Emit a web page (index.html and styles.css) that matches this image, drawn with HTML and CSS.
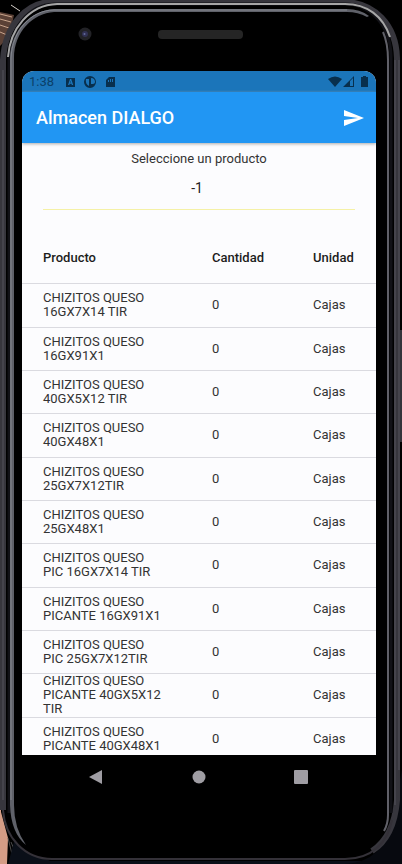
FILE: index.html
```html
<!DOCTYPE html>
<html lang="es">
<head>
<meta charset="utf-8">
<meta name="viewport" content="width=device-width, initial-scale=1">
<title>Almacen DIALGO</title>
<link rel="stylesheet" href="styles.css">
</head>
<body>
<div class="phone">
  <svg class="frame" viewBox="0 0 402 864" preserveAspectRatio="none" aria-hidden="true">
    <rect width="402" height="864" fill="#000"/>
    <path d="M0 12L14 15L12 24L6 40L0 46Z" fill="#5b4136"/>
    <path d="M0 14L12 17M0 19L11 22M0 25L9 28M0 32L7 35" stroke="#c9a58d" stroke-width="1"/>
    <path d="M11 5L20 11" stroke="#d8d2cc" stroke-width="1"/>
    <path d="M0 600H1V812L8 838L7 864H0Z" fill="#d49c85"/>
    <path d="M8 838L14 862M11 842L16 854" stroke="#4c4c4c" stroke-width="1"/>
    <path d="M8 864L14 842L50 861H402V864Z" fill="#0a0f18"/>
    <path d="M392 820L402 770V864H345Q384 862 392 820Z" fill="#07090f"/>
    <path d="M52 2C26 3 4 24 3 60V810C5 838 25 859 52 859H345C377 859 391 842 391 808V55C391 24 374 3 345 3Z" fill="#000"/>
    <path d="M3 810V60C5 24 28 2 52 2H345C374 3 396 24 397 58V800C395 826 386 842 372 851" fill="none" stroke="#37363d" stroke-width="6"/>
    <path d="M9 813V60C10 28 28 5 54 4H345C370 4 390 25 391 55V813" fill="none" stroke="#111116" stroke-width="3"/>
    <path d="M8 57C10 29 29 5 57 4H345C367 4 383 16 390 37" fill="none" stroke="#a6a6a6" stroke-width="2"/>
    <path d="M3 70V800M395 60V805M399 60V770" fill="none" stroke="#55535d" stroke-width="1"/>
    <path d="M3 810C5 838 25 859 52 859H345C372 859 388 842 392 820" fill="none" stroke="#343138" stroke-width="2"/>
    <path d="M26 845Q11 833 10 805V58C11 30 30 11 54 9H347Q360 9 369 16L367 17Q358 12 347 12H54C33 13 14 32 14 58V805Q14 828 26 845Z" fill="#5f6169"/>
    <path d="M11 800V58C12 31 31 10 54 10H347" fill="none" stroke="#858890" stroke-width="1"/>
    <path d="M383 32Q388 43 388 60V815Q388 824 384 831" fill="none" stroke="#606068" stroke-width="2"/>
    <rect x="400" y="330" width="2" height="112" fill="#33333a"/>
    <circle cx="85" cy="34" r="6.500" fill="#222226"/>
    <circle cx="85" cy="34" r="3" fill="#313153"/>
    <circle cx="84.500" cy="34" r="1" fill="#626a9c"/>
    <rect x="158" y="30" width="85" height="9" rx="4" fill="#252525"/>
  </svg>

  <main class="screen">
    <div class="status">
      <span class="clock">1:38</span>
      <svg class="notifications" viewBox="0 0 52 14" aria-hidden="true">
        <path fill-rule="evenodd" d="M1 3H10V12H1ZM5 4L3 10H4.300L4.800 8.700H6.400L6.900 10H8.200L6.200 4ZM5.600 5.800L6.100 7.500H5.100Z"/>
        <path fill-rule="evenodd" d="M25 1A6 6 0 1 0 25 13A6 6 0 1 0 25 1ZM26 3C29 3 30 5 30 7C30 8 29 9 28 9H26ZM21 4H24V11Q20 9 21 4Z"/>
        <path fill-rule="evenodd" d="M44 2H50V12H41V5ZM43 5V7H44V5ZM45 4V7H46V4ZM47 4V7H48V4Z"/>
      </svg>
      <svg class="signals" viewBox="0 0 42 14" aria-hidden="true">
        <path d="M1 4Q8 -1 15 4L8 12Z"/>
        <path fill-rule="evenodd" d="M16 12L27 1V12ZM23 6V11H26V3Z"/>
        <path d="M34 2H36V1H39V2H41V12H34Z"/>
      </svg>
    </div>
    <header class="appbar">
      <h1>Almacen DIALGO</h1>
      <button class="send" type="button" aria-label="Enviar">
        <svg viewBox="0 0 20 18" aria-hidden="true"><path d="M0 1L20 9L0 17V11L14 9L0 7Z"/></svg>
      </button>
    </header>
    <div class="field">
      <label for="product">Seleccione un producto</label>
      <input id="product" type="text" value="-1">
    </div>
    <table>
      <thead><tr><th class="product">Producto</th><th class="amount">Cantidad</th><th>Unidad</th></tr></thead>
      <tbody>
        <tr><td>CHIZITOS QUESO<br>16GX7X14 TIR</td><td>0</td><td>Cajas</td></tr>
        <tr><td>CHIZITOS QUESO<br>16GX91X1</td><td>0</td><td>Cajas</td></tr>
        <tr><td>CHIZITOS QUESO<br>40GX5X12 TIR</td><td>0</td><td>Cajas</td></tr>
        <tr><td>CHIZITOS QUESO<br>40GX48X1</td><td>0</td><td>Cajas</td></tr>
        <tr><td>CHIZITOS QUESO<br>25GX7X12TIR</td><td>0</td><td>Cajas</td></tr>
        <tr><td>CHIZITOS QUESO<br>25GX48X1</td><td>0</td><td>Cajas</td></tr>
        <tr><td>CHIZITOS QUESO<br>PIC 16GX7X14 TIR</td><td>0</td><td>Cajas</td></tr>
        <tr><td>CHIZITOS QUESO<br>PICANTE 16GX91X1</td><td>0</td><td>Cajas</td></tr>
        <tr><td>CHIZITOS QUESO<br>PIC 25GX7X12TIR</td><td>0</td><td>Cajas</td></tr>
        <tr><td>CHIZITOS QUESO<br>PICANTE 40GX5X12<br>TIR</td><td>0</td><td>Cajas</td></tr>
        <tr><td>CHIZITOS QUESO<br>PICANTE 40GX48X1</td><td>0</td><td>Cajas</td></tr>
      </tbody>
    </table>
  </main>

  <nav class="navbar" aria-label="Sistema">
    <button type="button" aria-label="Atrás"><svg viewBox="0 0 14 14" aria-hidden="true"><path d="M0 7L13 0V14Z"/></svg></button>
    <button type="button" aria-label="Inicio"><svg viewBox="0 0 14 14" aria-hidden="true"><circle cx="7" cy="7" r="6.500"/></svg></button>
    <button type="button" aria-label="Recientes"><svg viewBox="0 0 14 14" aria-hidden="true"><rect width="14" height="14" rx="1"/></svg></button>
  </nav>
</div>
</body>
</html>
```
FILE: styles.css
```css
* {
  box-sizing: border-box;
}

body {
  margin: 0;
  background: #000;
  color: #333;
  font-family: Roboto, "Liberation Sans", sans-serif;
  font-size: 13px;
  line-height: 14px;
}

button {
  display: flex;
  padding: 0;
  border: 0;
  background: none;
}

.phone {
  position: relative;
  display: grid;
  grid-template-rows: minmax(0, 1fr) auto;
  height: 100vh;
  padding: 71px 26px 0 22px;
  overflow: hidden;
}

.frame {
  position: absolute;
  inset: 0;
  width: 100%;
  height: 100%;
}

.screen {
  position: relative;
  overflow: hidden;
  border-radius: 12px 12px 0 0;
  background: #fcfcfe;
}

.status {
  display: flex;
  align-items: center;
  height: 21px;
  padding: 0 7px;
  background: #1b75ba;
  color: #0b4068;
}

.status svg {
  height: 14px;
  fill: #082f4d;
}

.notifications {
  width: 52px;
  margin-left: 11px;
}

.signals {
  width: 42px;
  margin-left: auto;
}

.appbar {
  position: relative;
  display: flex;
  align-items: center;
  justify-content: space-between;
  height: 51px;
  padding: 0 12px 0 14px;
  background: #2196f3;
  box-shadow: 0 1px 3px #aaa;
}

h1 {
  margin: 0;
  color: #fff;
  font-size: 18px;
  font-weight: 500;
  line-height: 24px;
}

.send svg {
  width: 20px;
  height: 18px;
  fill: #fff;
}

.field {
  display: flex;
  flex-direction: column;
  gap: 8px;
  margin: 0 21px 24px;
  padding-top: 9px;
  text-align: center;
}

.field input {
  width: 100%;
  height: 36px;
  padding: 0 4px 8px 0;
  border: 0;
  border-bottom: 1px solid #f5f1a6;
  background: none;
  color: #222;
  font: inherit;
  font-size: 14px;
  text-align: center;
  outline: 0;
}

table {
  width: 100%;
  table-layout: fixed;
  border-collapse: collapse;
}

.product {
  width: 190px;
}

.amount {
  width: 101px;
}

th,
td {
  padding: 0;
  text-align: left;
  vertical-align: middle;
}

th:first-child,
td:first-child {
  padding-left: 21px;
}

thead tr {
  height: 49px;
}

th {
  color: #1c1c1c;
  font-weight: 500;
}

tbody tr {
  height: 43px;
  border-top: 1px solid #dadae0;
}

tbody tr:nth-child(3n + 1) {
  height: 44px;
}

.navbar {
  position: relative;
  display: flex;
  justify-content: space-between;
  height: 109px;
  padding: 15px 68px 0 67px;
}

.navbar button {
  height: 14px;
}

.navbar svg {
  width: 14px;
  height: 14px;
  fill: #9f9da3;
}
```
